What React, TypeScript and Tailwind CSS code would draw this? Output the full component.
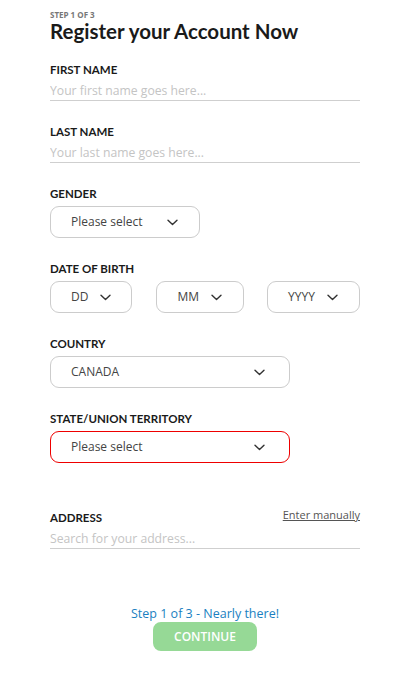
import React from "react";

// Chevron used inside every select box
const Chevron = () => (
  <svg width="11" height="7" viewBox="0 0 11 7" fill="none" className="shrink-0">
    <path d="M1 1.2 L5.5 5.6 L10 1.2" stroke="#333" strokeWidth="1.4" strokeLinecap="round" strokeLinejoin="round" />
  </svg>
);

const Label = ({ children }: { children: React.ReactNode }) => (
  <div className="text-[11.5px] font-bold text-[#1a1a1a] leading-[11px]" style={{ fontFamily: "Lato, 'Open Sans', sans-serif" }}>
    {children}
  </div>
);

const TextField = ({ placeholder }: { placeholder: string }) => (
  <input
    placeholder={placeholder}
    className="mt-[7px] block w-full border-b border-[#cfcfcf] pb-[1px] text-[12.2px] leading-[17px] text-[#333] outline-none placeholder:text-[#c4c4c4]"
  />
);

const SelectBox = ({
  label,
  className,
  gap = "justify-between",
}: {
  label: string;
  className: string;
  gap?: string;
}) => (
  <button
    className={`flex h-[32px] items-center rounded-[9px] border bg-white text-[12px] text-[#444] ${gap} ${className}`}
  >
    <span>{label}</span>
    <Chevron />
  </button>
);

export default function App() {
  return (
    <div
      className="min-h-[674px] w-[411px] bg-white px-[50px] pt-[10px]"
      style={{ fontFamily: "'Open Sans', 'Noto Sans', sans-serif" }}
    >
      <div className="w-[310px]">
        <div className="text-[8px] font-bold leading-[10px] text-[#777]">STEP 1 OF 3</div>
        <h1 className="text-[20.5px] font-bold leading-[23px] text-[#1a1a1a]" style={{ fontFamily: "Lato, sans-serif" }}>
          Register your Account Now
        </h1>

        <div className="mt-[21px]">
          <Label>FIRST NAME</Label>
          <TextField placeholder="Your first name goes here..." />
        </div>

        <div className="mt-[25px]">
          <Label>LAST NAME</Label>
          <TextField placeholder="Your last name goes here..." />
        </div>

        <div className="mt-[25px]">
          <Label>GENDER</Label>
          <SelectBox
            label="Please select"
            gap="gap-[25px]"
            className="mt-[7px] w-[150px] border-[#cccccc] pl-[20px]"
          />
        </div>

        <div className="mt-[25px]">
          <Label>DATE OF BIRTH</Label>
          <div className="mt-[7px] flex justify-between">
            <SelectBox label="DD" gap="gap-[12px]" className="w-[82px] border-[#cccccc] pl-[20px]" />
            <SelectBox label="MM" gap="gap-[12px]" className="w-[88px] border-[#cccccc] pl-[21px]" />
            <SelectBox label="YYYY" gap="gap-[12px]" className="w-[93px] border-[#cccccc] pl-[20px]" />
          </div>
        </div>

        <div className="mt-[25px]">
          <Label>COUNTRY</Label>
          <SelectBox label="CANADA" className="mt-[7px] w-[240px] border-[#cccccc] pl-[20px] pr-[24px]" />
        </div>

        <div className="mt-[25px]">
          <Label>STATE/UNION TERRITORY</Label>
          <SelectBox label="Please select" className="mt-[7px] w-[240px] border-[#ee0000] pl-[20px] pr-[24px]" />
        </div>

        <div className="mt-[46px]">
          <div className="flex items-end justify-between">
            <Label>ADDRESS</Label>
            <a className="mb-[3px] text-[11px] leading-none text-[#555] underline" href="#">
              Enter manually
            </a>
          </div>
          <TextField placeholder="Search for your address..." />
        </div>

        <div className="mt-[57px] flex flex-col items-center">
          <div className="text-[12.5px] leading-[16px] text-[#1a7fc1]">Step 1 of 3 - Nearly there!</div>
          <button className="h-[29px] w-[104px] rounded-[8px] bg-[#96d996] text-[12px] font-semibold text-white">
            CONTINUE
          </button>
        </div>
      </div>
    </div>
  );
}
